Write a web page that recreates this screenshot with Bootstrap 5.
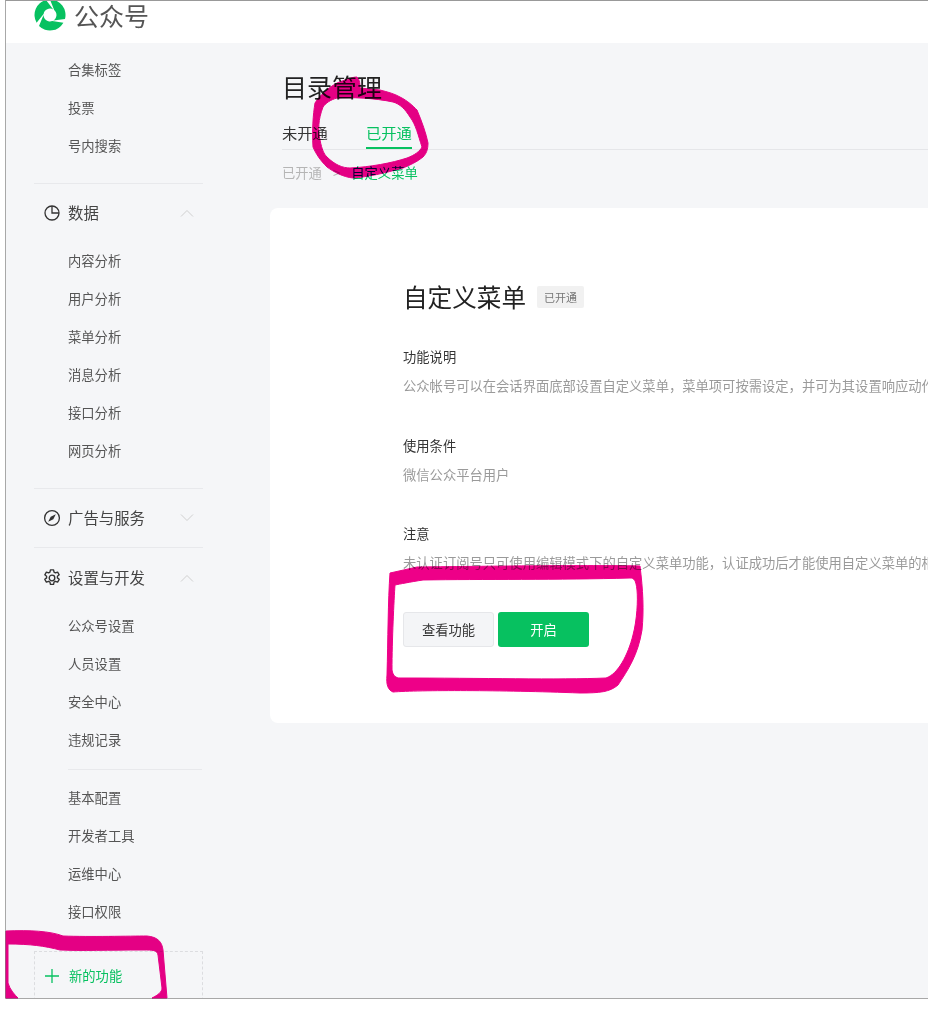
<!DOCTYPE html>
<html lang="zh">
<head>
<meta charset="utf-8">
<title>公众号</title>
<link href="https://cdn.jsdelivr.net/npm/bootstrap@5.3.0/dist/css/bootstrap.min.css" rel="stylesheet">
<style>
html,body{margin:0;height:1024px;background:#fff;overflow:hidden}
body{font-family:"Noto Sans CJK SC","Liberation Sans",sans-serif;font-size:13.3px;color:#353535}
.page-frame{margin-left:5px;height:999px;border:1px solid #a8a8a8;border-top-color:#999;border-right:0;overflow:hidden;background:#f5f6f8}
.top-bar{height:42px;background:#fff;padding-left:28px;gap:8px;flex:none}
.brand-text{font-size:25px;color:#555;line-height:30px;margin-top:-1px}
.logo-mark{margin-top:-2px}
.side-col{width:197px;padding-left:28px;flex:none}
.sub-link{height:38px;padding-left:34px;display:flex;align-items:center;color:#555;font-size:13.3px}
.side-rule{height:1px;background:#e8e9ec;width:169px}
.rule-a{margin-top:18px}
.rule-b{margin-top:18px}
.rule-c{width:134px;margin:10px 0 9px 34px}
.side-head{height:58px;display:flex;align-items:center;color:#444;font-size:15.4px;padding-left:9px;width:169px}
.head-tall{height:59px}
.side-head svg.head-ico{width:18px;height:18px;margin-right:7px;flex:none}
.side-head svg.chev{margin-left:auto;margin-right:9px;width:14px;height:8px}
.add-box{margin-top:20px;height:60px;width:169px;border:1px dashed #dcdde0;border-bottom:0;padding:12px 0 0 9px;color:#07c160;font-size:13.3px;gap:9px}
.main-col{min-width:0;padding-left:79px}
.page-title{font-size:25px;font-weight:400;line-height:34px;color:#222;margin:26px 0 0}
.tab-row{height:29px;margin-top:18px;border-bottom:1px solid #e5e6e9;gap:38px;font-size:15.3px;color:#353535}
.tab-item{height:28px;line-height:22px}
.tab-on{color:#07c160;border-bottom:2px solid #07c160}
.crumb-row{height:24px;margin-top:11px;font-size:13.3px;color:#b5b5b5;gap:11px;line-height:24px}
.crumb-now{color:#07c160}
.panel{margin:23px 0 0 -12px;background:#fff;border-radius:8px 0 0 8px;height:515px;padding:70px 0 0 133px;overflow:hidden}
.panel-title{font-size:24.6px;font-weight:400;line-height:36px;color:#222;margin:0}
.tag-on{background:#f1f1f1;color:#777;font-size:11px;height:22px;line-height:22px;padding:0 7px;border-radius:2px;margin:1px 0 0 11px}
.block-head{color:#353535;line-height:22px;margin:0}
.block-text{color:#9a9a9a;line-height:22px;margin:7px 0 0;white-space:nowrap}
.info-block{margin-top:38px}
.info-block.first{margin-top:32px}
.info-block.last{margin-top:37px}
.action-row{margin-top:38px;gap:4px}
.btn-see{width:91px;height:35px;background:#f4f5f7;border:1px solid #e6e7ea;color:#353535;font-size:13.3px;padding:0;border-radius:3px}
.btn-on{width:91px;height:35px;background:#07c160;border:0;color:#fff;font-size:13.3px;padding:0;border-radius:3px}
.ink-layer{position:absolute;left:0;top:0;pointer-events:none;mix-blend-mode:multiply}
</style>
</head>
<body>
<div class="page-frame d-flex flex-column">
  <div class="top-bar d-flex align-items-start">
    <svg class="logo-mark" width="32" height="32" viewBox="-16 -16 32 32" aria-hidden="true">
      <g fill="#07c160">
        <path d="M-13.4 7.75A15.5 15.5 0 0 1 -4 -15L3.25 -5.6A6.5 6.5 0 0 0 -6.4 -1.1Z"/>
        <path d="M-13.4 7.75A15.5 15.5 0 0 1 -4 -15L3.25 -5.6A6.5 6.5 0 0 0 -6.4 -1.1Z" transform="rotate(120)"/>
        <path d="M-13.4 7.75A15.5 15.5 0 0 1 -4 -15L3.25 -5.6A6.5 6.5 0 0 0 -6.4 -1.1Z" transform="rotate(240)"/>
      </g>
    </svg>
    <span class="brand-text">公众号</span>
  </div>
  <div class="d-flex flex-grow-1">
    <nav class="side-col">
      <div class="pt-2"></div>
      <div class="sub-link">合集标签</div>
      <div class="sub-link">投票</div>
      <div class="sub-link">号内搜索</div>
      <div class="side-rule rule-a"></div>
      <div class="side-head">
        <svg class="head-ico" viewBox="0 0 18 18" fill="none" stroke="#333" stroke-width="1.3"><circle cx="9" cy="9" r="7"/><path d="M9 2V9H16"/></svg>数据
        <svg class="chev" viewBox="0 0 14 8" fill="none" stroke="#cfcfcf"><path d="M1 7.5L7 1.5L13 7.5"/></svg>
      </div>
      <div class="sub-link">内容分析</div>
      <div class="sub-link">用户分析</div>
      <div class="sub-link">菜单分析</div>
      <div class="sub-link">消息分析</div>
      <div class="sub-link">接口分析</div>
      <div class="sub-link">网页分析</div>
      <div class="side-rule rule-b"></div>
      <div class="side-head">
        <svg class="head-ico" viewBox="0 0 18 18" fill="none" stroke="#333" stroke-width="1.3"><circle cx="9" cy="9" r="7.4"/><path d="M12.8 5.2L10.3 10.3L5.2 12.8L7.7 7.7Z" fill="#333" stroke="none"/></svg>广告与服务
        <svg class="chev" viewBox="0 0 14 8" fill="none" stroke="#cfcfcf"><path d="M1 .5L7 6.5L13 .5"/></svg>
      </div>
      <div class="side-rule"></div>
      <div class="side-head head-tall">
        <svg class="head-ico" viewBox="1 1 16 16" fill="none" stroke="#333" stroke-width="1.2"><circle cx="9" cy="9" r="2.5"/><path d="M7.6 1.8h2.8l.4 2 1.2.7 2-.7 1.4 2.4-1.6 1.3v1.4l1.6 1.3-1.4 2.4-2-.7-1.2.7-.4 2H7.6l-.4-2-1.2-.7-2 .7-1.4-2.4 1.6-1.3V7.5L2.6 6.2 4 3.8l2 .7 1.2-.7z" stroke-linejoin="round"/></svg>设置与开发
        <svg class="chev" viewBox="0 0 14 8" fill="none" stroke="#cfcfcf"><path d="M1 7.5L7 1.5L13 7.5"/></svg>
      </div>
      <div class="sub-link">公众号设置</div>
      <div class="sub-link">人员设置</div>
      <div class="sub-link">安全中心</div>
      <div class="sub-link">违规记录</div>
      <div class="side-rule rule-c"></div>
      <div class="sub-link">基本配置</div>
      <div class="sub-link">开发者工具</div>
      <div class="sub-link">运维中心</div>
      <div class="sub-link">接口权限</div>
      <div class="add-box d-flex align-items-start">
        <svg width="16" height="16" viewBox="0 0 16 16" stroke="#07c160" stroke-width="1.3" class="mt-1"><path d="M8 1V15M1 8H15"/></svg>
        <span style="line-height:24px">新的功能</span>
      </div>
    </nav>
    <main class="main-col flex-grow-1">
      <h1 class="page-title">目录管理</h1>
      <div class="tab-row d-flex">
        <div class="tab-item">未开通</div>
        <div class="tab-item tab-on">已开通</div>
      </div>
      <div class="crumb-row d-flex">
        <span>已开通</span><span>&gt;</span><span class="crumb-now">自定义菜单</span>
      </div>
      <section class="panel">
        <div class="d-flex align-items-center">
          <h2 class="panel-title">自定义菜单</h2>
          <span class="tag-on">已开通</span>
        </div>
        <div class="info-block first">
          <p class="block-head">功能说明</p>
          <p class="block-text">公众帐号可以在会话界面底部设置自定义菜单，菜单项可按需设定，并可为其设置响应动作。</p>
        </div>
        <div class="info-block">
          <p class="block-head">使用条件</p>
          <p class="block-text">微信公众平台用户</p>
        </div>
        <div class="info-block last">
          <p class="block-head">注意</p>
          <p class="block-text">未认证订阅号只可使用编辑模式下的自定义菜单功能，认证成功后才能使用自定义菜单的相关接口能力。</p>
        </div>
        <div class="action-row d-flex">
          <button class="btn btn-see" type="button">查看功能</button>
          <button class="btn btn-on" type="button">开启</button>
        </div>
      </section>
    </main>
  </div>
</div>
<svg class="ink-layer" width="928" height="1024" viewBox="0 0 928 1024" aria-hidden="true">
  <g fill="#ee0088" stroke="#ee0088" stroke-width="1" stroke-linejoin="round" fill-rule="evenodd">
    <path d="M315 103C320 95 328 88 337 83C345 80 352 77 357 77C360 80 360 85 360 88C367 89 373 89 380 90C388 92 395 94 400 97C408 101 413 106 417 110C422 122 426 133 428 143C428 150 426 154 423 157C417 162 410 165 403 168C385 173 368 177 353 178C343 177 334 172 327 167C320 160 316 154 313 147C312 130 313 115 315 103ZM323 107C318 120 318 130 320 140C322 150 324 154 327 157C335 165 343 168 350 168C370 167 392 163 407 158C415 155 420 151 422 147C418 135 416 125 410 117C405 109 400 104 393 102C375 98 350 97 337 98C330 100 326 103 323 107Z"/>
    <path d="M390 573L417 567C500 566 600 565 640 566C643 590 644 610 642 630C638 655 628 670 618 685C610 692 600 693 580 693C500 690 420 690 393 692C388 690 386 685 387 675C388 640 388 600 390 573ZM395 585C394 600 392 640 392 670C393 676 396 678 400 678C480 678 560 680 606 678C618 674 628 655 633 635C637 620 638 600 637 590C636 580 634 578 630 578C560 580 480 579 423 580C410 582 400 584 395 585Z"/>
    <path d="M6 931C30 930 50 931 63 936C90 937 130 936 147 936C158 937 162 942 163 950L167 998H152C158 995 162 992 162 988L158 955C157 950 153 950 143 950C110 950 80 951 60 950C45 946 30 944 8 944V983C10 990 15 995 18 998H6Z"/>
  </g>
</svg>
<script src="https://cdn.jsdelivr.net/npm/bootstrap@5.3.0/dist/js/bootstrap.bundle.min.js"></script>
</body>
</html>
